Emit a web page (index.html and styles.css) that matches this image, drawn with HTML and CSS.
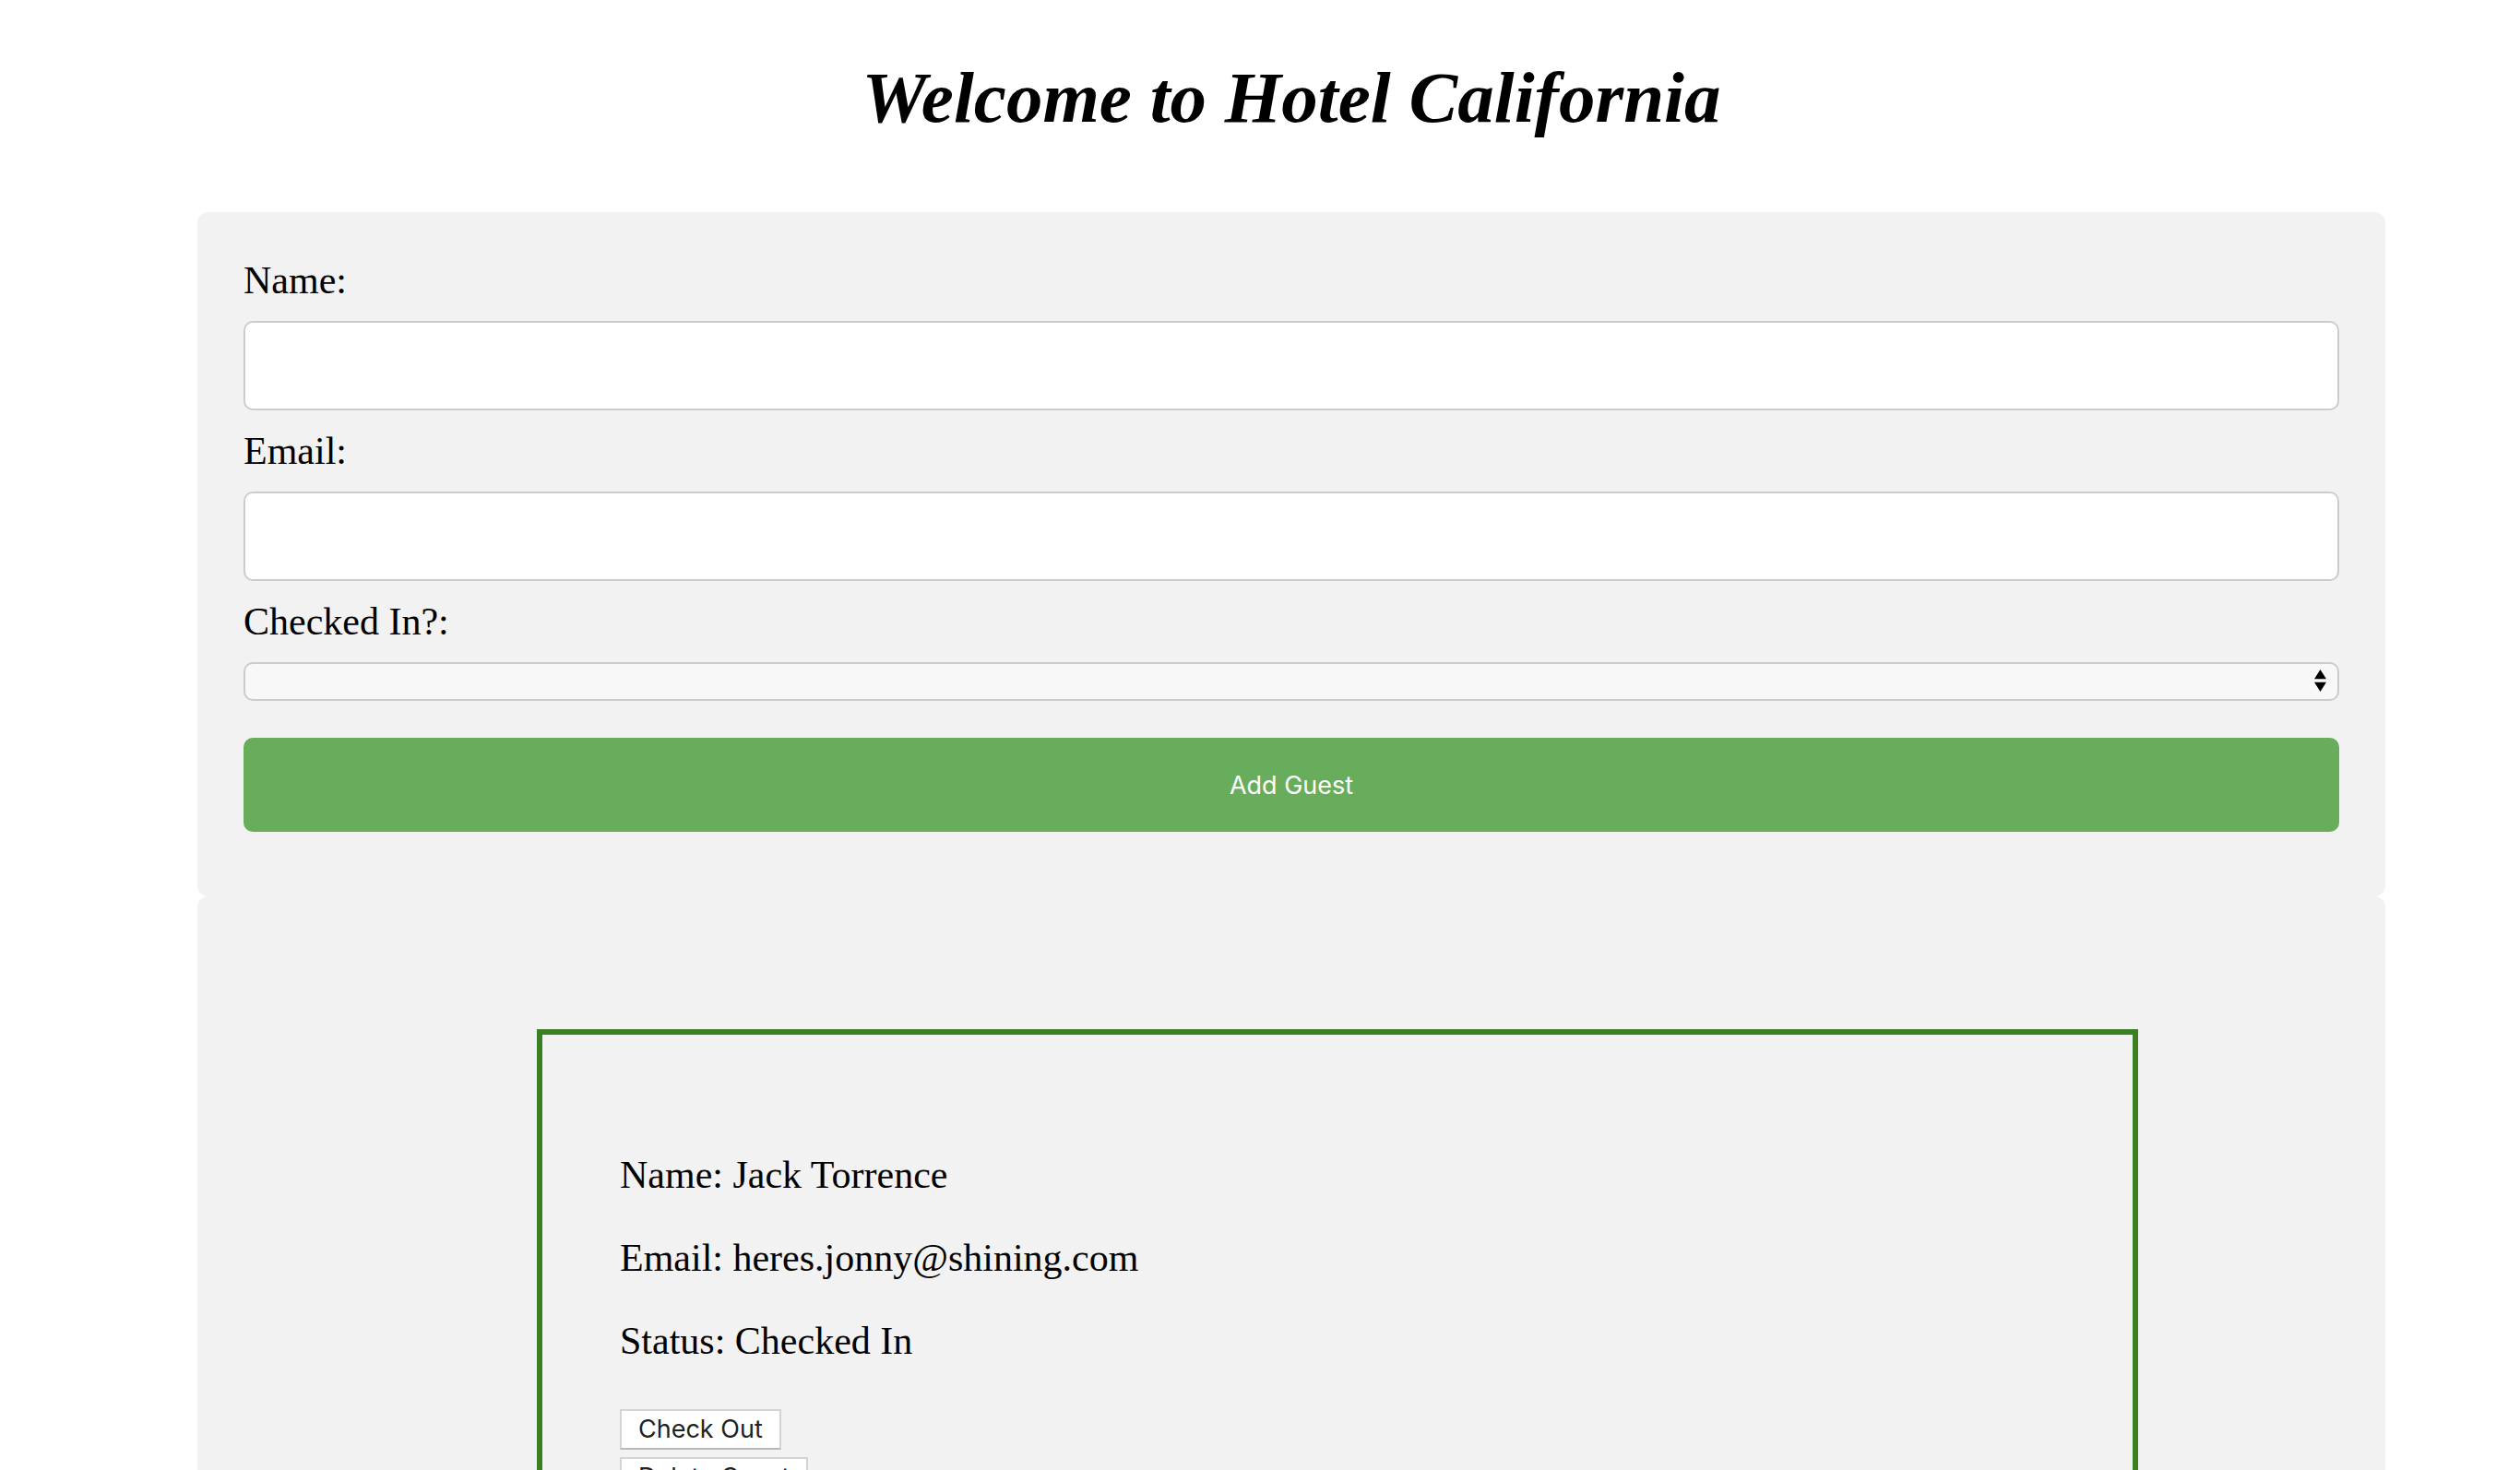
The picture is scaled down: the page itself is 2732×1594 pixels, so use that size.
FILE: index.html
```html
<!DOCTYPE html>
<html lang="en">
<head>
<meta charset="utf-8">
<meta name="viewport" content="width=device-width, initial-scale=1">
<title>Hotel California</title>
<link rel="stylesheet" href="styles.css">
</head>
<body>
<main class="page">
  <h1 class="title">Welcome to Hotel California</h1>
  <form class="panel guest-form">
    <label class="label" for="name">Name:</label>
    <input class="field" id="name" type="text">
    <label class="label" for="email">Email:</label>
    <input class="field" id="email" type="text">
    <label class="label" for="status">Checked In?:</label>
    <div class="select-wrap">
      <select class="select" id="status">
        <option value=""></option>
        <option value="true">Yes</option>
        <option value="false">No</option>
      </select>
      <svg class="arrows" viewBox="0 0 14 26" aria-hidden="true"><path d="M7 0L14 11H0ZM0 15H14L7 26Z"/></svg>
    </div>
    <button class="submit" type="button">Add Guest</button>
  </form>
  <section class="panel guests">
    <article class="card">
      <p class="detail">Name: Jack Torrence</p>
      <p class="detail">Email: heres.jonny@shining.com</p>
      <p class="detail">Status: Checked In</p>
      <div class="actions">
        <button class="action" type="button">Check Out</button>
        <button class="action" type="button">Delete Guest</button>
      </div>
    </article>
  </section>
</main>
</body>
</html>
```
FILE: styles.css
```css
* {
  box-sizing: border-box;
}

html {
  scrollbar-width: none;
}

body {
  margin: 0;
  background: #fff;
  color: #000;
  font-family: "Liberation Serif", "Times New Roman", serif;
  font-size: 42px;
  line-height: 48px;
}

.page {
  padding: 0 146px 0 214px;
}

.title {
  margin: 0;
  padding: 56px 0 74px;
  font-family: "Apple Chancery", "Liberation Serif", cursive;
  font-size: 79px;
  font-style: italic;
  font-weight: 700;
  line-height: 100px;
  text-align: center;
}

.panel {
  padding: 50px;
  border-radius: 12px;
  background: #f2f2f2;
}

.guest-form {
  display: flex;
  flex-direction: column;
  gap: 20px;
  padding-bottom: 70px;
}

.field,
.select {
  width: 100%;
  border: 2px solid #ccc;
  border-radius: 10px;
  font-family: Inter, sans-serif;
  font-size: 28px;
}

.field {
  height: 97px;
  padding: 0 40px;
  background: #fff;
}

.select-wrap {
  position: relative;
  display: flex;
}

.select {
  height: 42px;
  padding: 0 20px;
  appearance: none;
  background: #f8f8f8;
}

.arrows {
  position: absolute;
  top: 7px;
  right: 14px;
  width: 13px;
  height: 26px;
  pointer-events: none;
}

.submit {
  height: 102px;
  margin-top: 20px;
  border: 0;
  border-radius: 10px;
  background: #68ad5c;
  color: #fff;
  font-family: Inter, sans-serif;
  font-size: 27px;
}

.card {
  margin: 94px 218px 94px 318px;
  padding: 86px 84px;
  border: 6px solid #3a8022;
}

.detail {
  margin: 42px 0;
}

.actions {
  display: flex;
  flex-direction: column;
  align-items: flex-start;
  gap: 8px;
  padding-top: 8px;
}

.action {
  height: 44px;
  padding: 0 18px;
  border: 2px solid #d4d4d4;
  border-bottom-color: #b8b8b8;
  background: #fff;
  color: #222;
  font-family: Inter, sans-serif;
  font-size: 27px;
  line-height: 36px;
}
```
